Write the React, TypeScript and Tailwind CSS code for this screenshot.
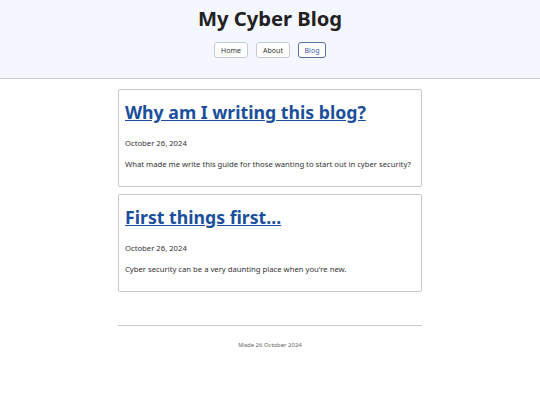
import React from "react";

const posts = [
  {
    title: "Why am I writing this blog?",
    date: "October 26, 2024",
    desc: "What made me write this guide for those wanting to start out in cyber security?",
  },
  {
    title: "First things first...",
    date: "October 26, 2024",
    desc: "Cyber security can be a very daunting place when you're new.",
  },
];

export default function App() {
  return (
    <div className="min-h-[405px] bg-white text-[#222] [font-family:'Noto_Sans',sans-serif]">
      <header className="h-[79px] bg-[#f5f7ff] border-b border-[#c8c8d0] flex flex-col items-center pt-[4px]">
        <h1 className="text-[20.2px] leading-[28px] font-bold text-[#222]">My Cyber Blog</h1>
        <nav className="flex gap-[8px] mt-[10px]">
          <button className="h-[16px] w-[34px] text-[7px] leading-none rounded-[3px] border border-[#c5c9d6] bg-white text-[#333]">Home</button>
          <button className="h-[16px] w-[34px] text-[7px] leading-none rounded-[3px] border border-[#c5c9d6] bg-white text-[#333]">About</button>
          <button className="h-[16px] w-[28px] text-[7px] leading-none rounded-[3px] border border-[#5a6fa8] bg-white text-[#3b5aa0]">Blog</button>
        </nav>
      </header>
      <main className="w-[304px] mx-auto pt-[10px] flex flex-col gap-[7px]">
        {posts.map((p) => (
          <article key={p.title} className="h-[98px] border border-[#c8c8cc] rounded-[2px] px-[6px] pt-[10px]">
            <h2 className="text-[17.7px] leading-[24px] font-bold">
              <a href="#" className="text-[#1b4f9c] underline">{p.title}</a>
            </h2>
            <p className="text-[7.7px] leading-[12px] mt-[13px] text-[#333]">{p.date}</p>
            <p className="text-[7.7px] leading-[12px] mt-[9px] text-[#333]">{p.desc}</p>
          </article>
        ))}
      </main>
      <footer className="w-[304px] mx-auto mt-[33px] border-t border-[#c8c8d0] pt-[14px] text-center text-[5.95px] leading-[10px] text-[#666]">
        Made 26 October 2024
      </footer>
    </div>
  );
}
